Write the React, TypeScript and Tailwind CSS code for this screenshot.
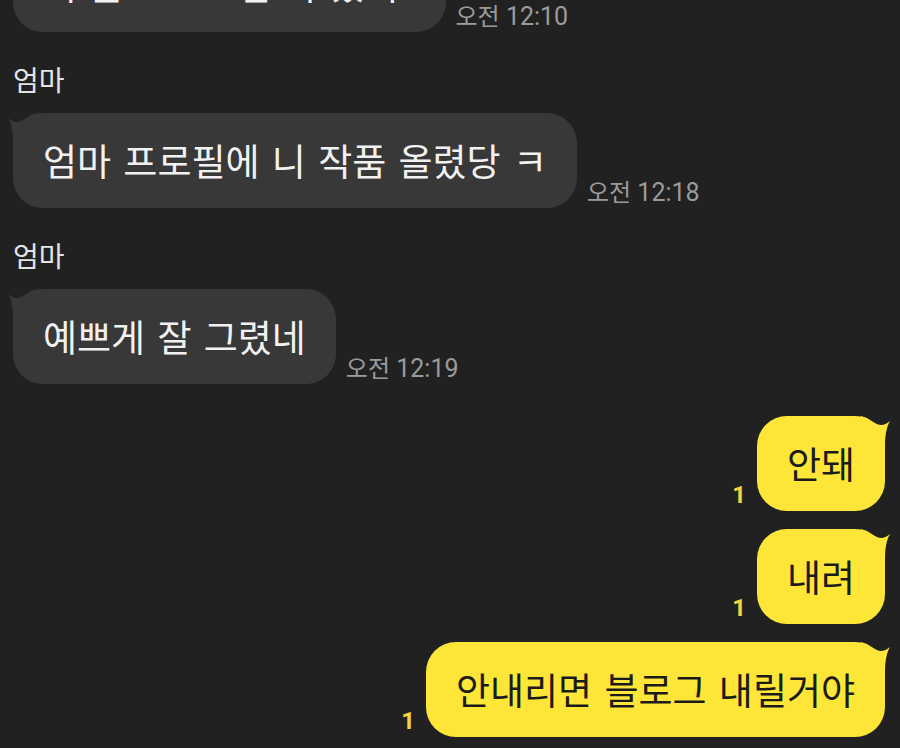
import React from "react";

type Msg =
  | { kind: "name"; text: string }
  | { kind: "in"; text: string; time?: string }
  | { kind: "out"; text: string; unread?: number };

const messages: Msg[] = [
  { kind: "name", text: "엄마" },
  { kind: "in", text: "엄마 프로필에 니 작품 올렸당 ㅋ", time: "12:18" },
  { kind: "name", text: "엄마" },
  { kind: "in", text: "예쁘게 잘 그렸네", time: "12:19" },
  { kind: "out", text: "안돼", unread: 1 },
  { kind: "out", text: "내려", unread: 1 },
  { kind: "out", text: "안내리면 블로그 내릴거야", unread: 1 },
];

const font = { fontFamily: '"Noto Sans CJK KR", "Noto Sans", sans-serif' };

const Tail = ({ color, right }: { color: string; right?: boolean }) => (
  <svg
    width="30"
    height="34"
    viewBox="0 0 30 34"
    className={
      right
        ? "absolute top-0 right-[-6px] -scale-x-100"
        : "absolute top-0 left-[-6px]"
    }
  >
    <path
      d="M1 5 Q9 12 16 7 Q20 5 24 2 L30 0 L30 34 L6 34 L6 30 C6 18 4 10 1 5 Z"
      fill={color}
    />
  </svg>
);

const Time = ({ time }: { time: string }) => (
  <span
    className="mb-[3px] whitespace-nowrap text-[25px] leading-none text-[#9b9b9b]"
    style={{ fontFamily: 'Roboto, "Noto Sans CJK KR", sans-serif' }}
  >
    <span className="text-[24px]" style={font}>
      오전
    </span>{" "}
    {time}
  </span>
);

const Incoming = ({
  text,
  time,
  tail,
  wide,
}: {
  text: string;
  time?: string;
  tail?: boolean;
  wide?: boolean;
}) => (
  <div className="flex items-end gap-[10px]">
    <div
      className={`relative flex h-[95px] items-center rounded-[30px] bg-[#383838] pl-[30px] ${
        wide ? "pr-[47px]" : "pr-[30px]"
      }`}
    >
      {tail && <Tail color="#383838" />}
      <span className="relative whitespace-pre text-[37px] [word-spacing:4px] text-[#f1f1f1]">
        {text}
      </span>
    </div>
    {time && <Time time={time} />}
  </div>
);

const Outgoing = ({ text, unread }: { text: string; unread?: number }) => (
  <div className="flex items-end justify-end gap-[11px]">
    {unread && (
      <span
        className="mb-[4px] text-[24px] font-bold leading-none text-[#f3d53c]"
        style={{ fontFamily: "Roboto, sans-serif" }}
      >
        {unread}
      </span>
    )}
    <div className="relative flex h-[95px] items-center rounded-[30px] bg-[#fde637] px-[30px]">
      <Tail color="#fde637" right />
      <span className="relative whitespace-pre text-[37px] [word-spacing:4px] text-[#1b1b1b]">
        {text}
      </span>
    </div>
  </div>
);

export default function App() {
  return (
    <div className="h-[748px] w-[900px] overflow-hidden bg-[#212121]" style={font}>
      <div className="mt-[-63px] flex flex-col pl-[13px] pr-[15px]">
        <Incoming text="니 블로그 그림 다 봤어" time="12:10" wide />
        {messages.map((m, i) => {
          if (m.kind === "name")
            return (
              <div key={i} className="mt-[29px] mb-[16px] text-[28px] leading-[36px] text-[#e4e4e4]">
                {m.text}
              </div>
            );
          if (m.kind === "in") return <Incoming key={i} text={m.text} time={m.time} tail />;
          const prevOut = messages[i - 1]?.kind === "out";
          return (
            <div key={i} className={prevOut ? "mt-[18px]" : "mt-[32px]"}>
              <Outgoing text={m.text} unread={m.unread} />
            </div>
          );
        })}
      </div>
    </div>
  );
}
